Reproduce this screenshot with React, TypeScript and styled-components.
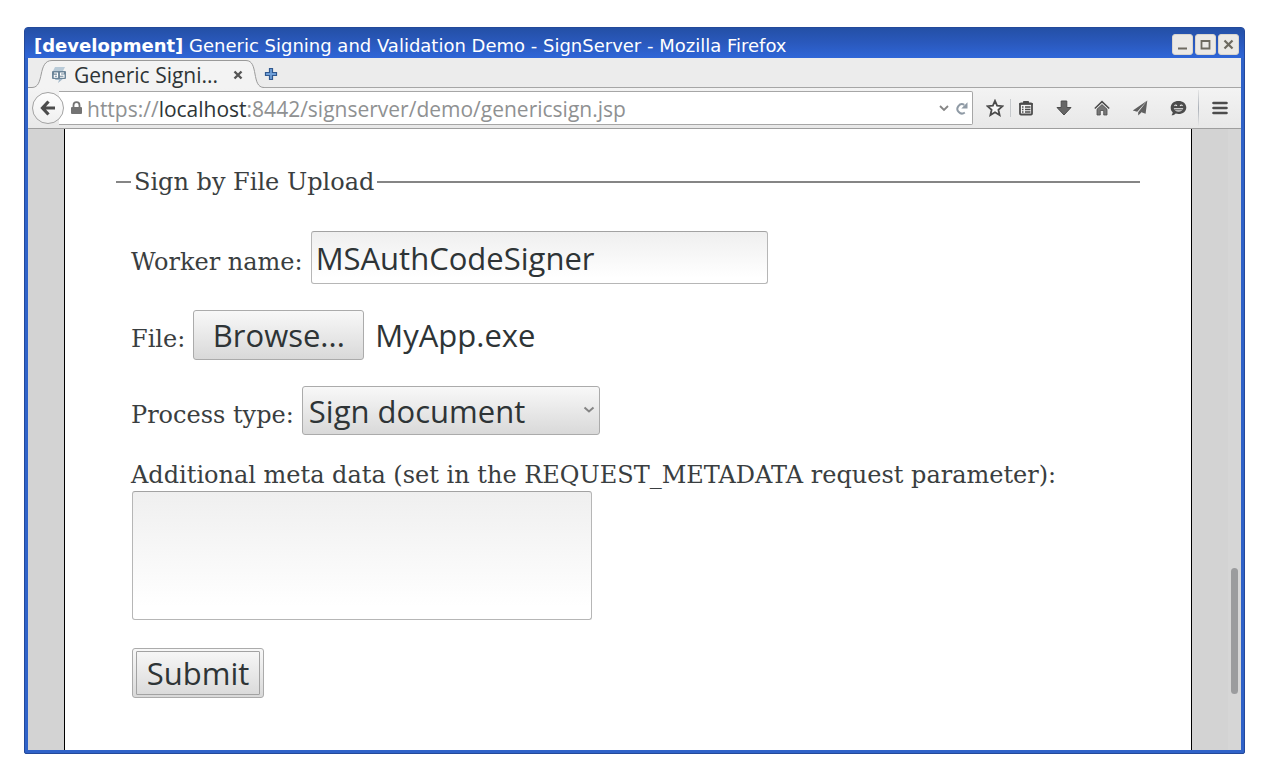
import React, { useRef, useState } from 'react';
import styled, { createGlobalStyle, css } from 'styled-components';

const ui = '"Open Sans", "Noto Sans", sans-serif';
const serif = '"DejaVu Serif", serif';

const GlobalStyle = createGlobalStyle`
  *, *::before, *::after { box-sizing: border-box; }
  body { margin: 0; background: #fff; }
  button, input, select, textarea { margin: 0; font: inherit; color: inherit; }
`;

const Desktop = styled.div`
  display: flex;
  min-height: 100vh;
  padding: 27px 29px 24px 24px;
`;

const Window = styled.div`
  flex: 1;
  display: flex;
  flex-direction: column;
  min-width: 0;
  padding: 0 3px 3px;
  border: 1px solid #24499a;
  border-radius: 4px 4px 2px 2px;
  background: #2f62c8;
  overflow: hidden;
`;

const TitleBar = styled.header`
  display: flex;
  align-items: center;
  gap: 2px;
  height: 30px;
  margin: 0 -3px;
  padding: 2px 5px 0 9px;
  background: linear-gradient(#2450a6, #2a59bd 50%, #2f66d8);
  color: #fff;
`;

const Title = styled.h1`
  flex: 1;
  margin: 0;
  padding-top: 4px;
  font: 400 18px/24px "DejaVu Sans", sans-serif;
  white-space: nowrap;
`;

const WindowButton = styled.button`
  display: flex;
  align-items: center;
  justify-content: center;
  width: 21px;
  height: 21px;
  padding: 0;
  border: 1px solid #d9d5cd;
  border-radius: 3px;
  background: #ebe9e6;
`;

const TabStrip = styled.div`
  display: flex;
  height: 30px;
  background: #ececec;
`;

const TabCap = styled.svg`
  display: block;
  flex: none;
`;

const Tab = styled.div`
  display: flex;
  align-items: center;
  width: 194px;
  height: 28px;
  margin-top: 2px;
  border-top: 1px solid #9a9a9a;
  background: #f3f3f3;
`;

const TabTitle = styled.span`
  flex: 1;
  margin-left: 8px;
  font: 21px/26px ${ui};
  color: #2e3436;
  white-space: nowrap;
`;

const TabRest = styled.div`
  flex: 1;
  display: flex;
  padding-top: 2px;
  border-bottom: 1px solid #a6a6a6;
`;

const PlainButton = styled.button<{ $w: number }>`
  display: flex;
  align-items: center;
  justify-content: center;
  flex: none;
  width: ${p => p.$w}px;
  padding: 0;
  border: 0;
  background: none;
`;

const NavBar = styled.nav`
  display: flex;
  align-items: center;
  height: 41px;
  padding: 0 6px 0 4px;
  border-bottom: 1px solid #9e9e9e;
  background: linear-gradient(#f3f3f3, #e8e8e8);
`;

const BackButton = styled.button`
  position: relative;
  z-index: 1;
  display: flex;
  align-items: center;
  justify-content: center;
  flex: none;
  width: 32px;
  height: 32px;
  padding: 0;
  border: 1px solid #a3a3a3;
  border-radius: 50%;
  background: linear-gradient(#fdfdfd, #f0f0f0);
`;

const UrlBar = styled.div`
  flex: 1;
  display: flex;
  align-items: center;
  gap: 5px;
  min-width: 0;
  height: 34px;
  margin-left: -5px;
  padding: 0 4px 0 12px;
  border: 1px solid #a6a6a6;
  border-left: 0;
  border-radius: 0 2px 2px 0;
  background: #fff;
`;

const Address = styled.span`
  flex: 1;
  padding-top: 2px;
  font: 21px/28px ${ui};
  color: #8f9192;
  white-space: nowrap;
  overflow: hidden;
`;

const Host = styled.span`
  color: #2e3436;
`;

const Tools = styled.div`
  display: flex;
  align-items: center;
  gap: 8px;
`;

const StarSlot = styled.div`
  display: flex;
  margin-left: 7px;
`;

const Divider = styled.span<{ $tall?: boolean }>`
  flex: none;
  width: 1px;
  height: 18px;
  background: #c6c9cc;
  ${p => p.$tall && css`
    height: 36px;
    margin: 0 6px 0 5px;
    background: linear-gradient(#e6e6e6, #aab0b8 50%, #e6e6e6);
  `}
`;

const Viewport = styled.div`
  flex: 1;
  display: flex;
  background: #d3d3d3;
`;

const PageArea = styled.main`
  flex: 1;
  min-width: 0;
  padding: 39px 51px 48px;
  margin: 0 36px;
  border: solid #000;
  border-width: 0 1px;
  background: #fff;
`;

const ScrollTrack = styled.div`
  display: flex;
  flex-direction: column;
  width: 13px;
  padding: 0 3px;
  background: #d6d6d6;
`;

const ScrollSpace = styled.div<{ $share: number }>`
  flex: ${p => p.$share};
`;

const ScrollThumb = styled.div`
  flex: 126;
  border-radius: 4px;
  background: #9b9c9e;
`;

const Fieldset = styled.fieldset`
  min-width: 0;
  margin: 0;
  padding: 35px 15px 0;
  border: 0;
  border-top: 2px solid #858585;
  font: 24px/28px ${serif};
  color: #3a3e40;
`;

const Legend = styled.legend`
  padding: 0 3px;
`;

const Form = styled.form`
  display: flex;
  flex-direction: column;
  align-items: flex-start;
  gap: 26px;
`;

const Row = styled.div`
  display: flex;
  align-items: baseline;
  gap: 8px;
`;

const MetaRow = styled.div`
  display: flex;
  flex-direction: column;
  gap: 2px;
  padding-bottom: 2px;
`;

const sunken = css`
  border: 1px solid #b6b6b6;
  border-top-color: #a2a2a2;
  border-radius: 3px;
  background: linear-gradient(#efefef, #fff 90%);
  font: 31px/42px ${ui};
  color: #2e3436;
  outline: none;
`;

const raised = css`
  border: 1px solid #ababab;
  border-radius: 3px;
  background: linear-gradient(#f8f8f8, #d9d9d9);
  font: 31px/42px ${ui};
  color: #2e3436;
`;

const TextInput = styled.input`
  ${sunken}
  width: 457px;
  height: 53px;
  padding: 0 4px;
`;

const TextArea = styled.textarea`
  ${sunken}
  display: block;
  width: 460px;
  height: 129px;
  margin-left: 1px;
  padding: 4px;
  resize: none;
`;

const BrowseButton = styled.button`
  ${raised}
  width: 171px;
  height: 50px;
  padding: 0;
`;

const HiddenFile = styled.input`
  display: none;
`;

const FileName = styled.output`
  margin-left: 3px;
  font: 31px/42px ${ui};
  color: #2e3436;
`;

const SelectBox = styled.div`
  position: relative;
  display: flex;
  align-items: baseline;
`;

const Select = styled.select`
  ${raised}
  appearance: none;
  width: 298px;
  height: 49px;
  padding: 0 24px 0 6px;
`;

const SelectArrow = styled.svg`
  position: absolute;
  right: 5px;
  top: 20px;
  pointer-events: none;
`;

const SubmitButton = styled.button`
  ${raised}
  height: 50px;
  width: 132px;
  margin-left: 1px;
  padding: 2px 3px;
`;

const SubmitFace = styled.span`
  display: block;
  border: 1px solid #a2a2a2;
  border-radius: 1px;
`;

const ink = '#4c4c4c';

function Favicon() {
  return (
    <svg width="14" height="16" viewBox="0 0 14 16">
      <path d="M3 0h10l-2 4H1z" fill="#b9cbd8" />
      <path d="M4 11h8l-6 5 1-3H3z" fill="#a3b8c9" />
      <rect x="0" y="4" width="14" height="8" rx="1" fill="#6c8599" />
      <path d="M2 6h3.500v4.200H2.300v-2h3M12 6H8.500v2.100H12v2.100H8" fill="none" stroke="#fff" strokeWidth="1.100" />
    </svg>
  );
}

function Toolbar() {
  return (
    <Tools>
      <PlainButton $w={30} aria-label="View bookmarks">
        <svg width="16" height="16" viewBox="0 0 16 16">
          <path d="M5.500 3V1.500h5V3" fill={ink} stroke={ink} />
          <rect x="2" y="3.500" width="12" height="11" rx="1" fill="#f4f4f4" stroke={ink} strokeWidth="1.800" />
          <path d="M1 4h14M4 7h1.500M7 7h5.500M4 9.500h1.500M7 9.500h5.500M4 12h1.500M7 12h5.500" stroke={ink} strokeWidth="1.300" />
        </svg>
      </PlainButton>
      <PlainButton $w={30} aria-label="Downloads">
        <svg width="16" height="16" viewBox="0 0 16 16">
          <path d="M5.200 1h5.600v6.500H15L8 15 1 7.500h4.200z" fill="#666" stroke={ink} />
        </svg>
      </PlainButton>
      <PlainButton $w={30} aria-label="Home">
        <svg width="16" height="16" viewBox="0 0 16 16">
          <path d="M.8 8.500 8 1.700l7.200 6.800" fill="none" stroke={ink} strokeWidth="1.600" />
          <path d="M3 9.200 8 4.600l5 4.600V15H9.700v-4.500H6.300V15H3z" fill="#777" stroke={ink} strokeWidth=".8" />
        </svg>
      </PlainButton>
      <PlainButton $w={30} aria-label="Share this page">
        <svg width="16" height="16" viewBox="0 0 16 16">
          <path d="M15.300.5.800 10.500l4.400 1.300zM15.300.5 6.200 12.300V15.500l2.600-2.600zM15.300.5 8 11.800l5.600 2z" fill="#606060" />
        </svg>
      </PlainButton>
      <PlainButton $w={30} aria-label="Start a conversation">
        <svg width="17" height="16" viewBox="0 0 17 16">
          <path d="M8.500 1C13 1 16.300 3.700 16.300 7.500S13 14 8.500 14c-1 0-2-.1-2.800-.4C4.700 14.900 3 15.500 1.500 15.300c.8-.9 1.200-1.800 1.200-3C1.200 11.100.7 9.400.7 7.500.7 3.700 4 1 8.500 1z" fill={ink} />
          <path d="M4.500 5.800q1.200-1.600 2.400 0M10.100 5.800q1.200-1.600 2.400 0" fill="none" stroke="#eee" strokeWidth="1.200" />
          <path d="M3.700 8h9.600c-.5 2.400-2.400 3.800-4.800 3.800S4.200 10.400 3.700 8z" fill="#ccc" />
          <path d="M4.500 9.700h8" stroke={ink} strokeWidth=".8" />
        </svg>
      </PlainButton>
    </Tools>
  );
}

export default function App() {
  const fileInput = useRef<HTMLInputElement>(null);
  const [fileName, setFileName] = useState('MyApp.exe');

  return (
    <Desktop>
      <GlobalStyle />
      <Window>
        <TitleBar>
          <Title><b>[development]</b> Generic Signing and Validation Demo - SignServer - Mozilla Firefox</Title>
          <WindowButton aria-label="Minimize">
            <svg width="13" height="13"><path d="M2 10.500h9" stroke="#6e6a60" strokeWidth="2" /></svg>
          </WindowButton>
          <WindowButton aria-label="Maximize">
            <svg width="13" height="13"><path d="M2.500 3h8v7.500h-8z" fill="none" stroke="#6e6a60" strokeWidth="1.800" /></svg>
          </WindowButton>
          <WindowButton aria-label="Close">
            <svg width="13" height="13"><path d="M2.500 2.500l8 8M10.500 2.500l-8 8" stroke="#6e6a60" strokeWidth="2.200" /></svg>
          </WindowButton>
        </TitleBar>

        <TabStrip>
          <TabCap width="24" height="30" viewBox="0 0 24 30">
            <path d="M0 29.500H4C17 29.500 9 2.500 24 2.500V30H0z" fill="#f3f3f3" />
            <path d="M0 29.500H4C17 29.500 9 2.500 24 2.500" fill="none" stroke="#9a9a9a" />
          </TabCap>
          <Tab>
            <Favicon />
            <TabTitle>Generic Signi...</TabTitle>
            <PlainButton $w={16} aria-label="Close tab">
              <svg width="10" height="10"><path d="M1.500 1.500l7 7M8.500 1.500l-7 7" stroke="#555" strokeWidth="2.400" /></svg>
            </PlainButton>
          </Tab>
          <TabCap width="18" height="30" viewBox="0 0 18 30">
            <path d="M0 2.500C13 2.500 5 29.500 18 29.500V30H0z" fill="#f3f3f3" />
            <path d="M0 2.500C13 2.500 5 29.500 18 29.500" fill="none" stroke="#9a9a9a" />
          </TabCap>
          <TabRest>
            <PlainButton $w={14} aria-label="New tab">
              <svg width="14" height="14" viewBox="0 0 14 14">
                <path d="M5.500 1.500h3v4h4v3h-4v4h-3v-4h-4v-3h4z" fill="#6f9fd8" stroke="#30588f" strokeWidth="1.200" />
              </svg>
            </PlainButton>
          </TabRest>
        </TabStrip>

        <NavBar>
          <BackButton aria-label="Back">
            <svg width="16" height="16" viewBox="0 0 16 16">
              <path d="M8.500 1.500 2.500 8l6 6.500M3 8h12" fill="none" stroke={ink} strokeWidth="3.200" />
            </svg>
          </BackButton>
          <UrlBar>
            <svg width="11" height="14" viewBox="0 0 11 14">
              <path d="M2.500 7V4.200a3 3 0 0 1 6 0V7" fill="none" stroke="#737373" strokeWidth="1.800" />
              <rect x="0" y="6" width="11" height="7" rx="1" fill="#737373" />
            </svg>
            <Address>https://<Host>localhost</Host>:8442/signserver/demo/genericsign.jsp</Address>
            <PlainButton $w={12} aria-label="Show history">
              <svg width="10" height="7"><path d="M1 1l4 4 4-4" fill="none" stroke="#858585" strokeWidth="1.800" /></svg>
            </PlainButton>
            <PlainButton $w={13} aria-label="Reload">
              <svg width="13" height="13" viewBox="0 0 13 13">
                <path d="M9.300 2.800A4.600 4.600 0 1 0 9.800 10.500" fill="none" stroke="#8f9aa5" strokeWidth="2" />
                <path d="M12.500 .3V6.500H6.300z" fill="#8f9aa5" />
              </svg>
            </PlainButton>
          </UrlBar>
          <StarSlot>
            <PlainButton $w={30} aria-label="Bookmark this page">
              <svg width="18" height="18" viewBox="0 0 18 18">
                <path d="M9 1.800l2.100 4.900 5.300.5-4 3.600 1.200 5.200L9 13.200 4.400 16l1.200-5.200-4-3.600 5.300-.5z" fill="#f8f8f8" stroke={ink} strokeWidth="1.800" />
              </svg>
            </PlainButton>
          </StarSlot>
          <Divider />
          <Toolbar />
          <Divider $tall />
          <PlainButton $w={30} aria-label="Open menu">
            <svg width="16" height="14"><path d="M1.500 2h13M1.500 7h13M1.500 12h13" stroke={ink} strokeWidth="2.600" strokeLinecap="round" /></svg>
          </PlainButton>
        </NavBar>

        <Viewport>
          <PageArea>
            <Fieldset>
              <Legend>Sign by File Upload</Legend>
              <Form onSubmit={e => e.preventDefault()}>
                <Row>
                  <label htmlFor="worker">Worker name:</label>
                  <TextInput id="worker" type="text" defaultValue="MSAuthCodeSigner" />
                </Row>
                <Row>
                  <label htmlFor="file">File:</label>
                  <HiddenFile
                    id="file"
                    type="file"
                    ref={fileInput}
                    onChange={e => setFileName(e.target.files?.[0]?.name ?? '')}
                  />
                  <BrowseButton type="button" onClick={() => fileInput.current?.click()}>Browse...</BrowseButton>
                  <FileName htmlFor="file">{fileName}</FileName>
                </Row>
                <Row>
                  <label htmlFor="process">Process type:</label>
                  <SelectBox>
                    <Select id="process" defaultValue="sign">
                      <option value="sign">Sign document</option>
                      <option value="validate">Validate document</option>
                    </Select>
                    <SelectArrow width="12" height="8"><path d="M1.500 1.500l4.500 4 4.500-4" fill="none" stroke="#858585" strokeWidth="2" /></SelectArrow>
                  </SelectBox>
                </Row>
                <MetaRow>
                  <label htmlFor="meta">Additional meta data (set in the REQUEST_METADATA request parameter):</label>
                  <TextArea id="meta" />
                </MetaRow>
                <SubmitButton type="submit"><SubmitFace>Submit</SubmitFace></SubmitButton>
              </Form>
            </Fieldset>
          </PageArea>
          <ScrollTrack>
            <ScrollSpace $share={439} />
            <ScrollThumb />
            <ScrollSpace $share={56} />
          </ScrollTrack>
        </Viewport>
      </Window>
    </Desktop>
  );
}
